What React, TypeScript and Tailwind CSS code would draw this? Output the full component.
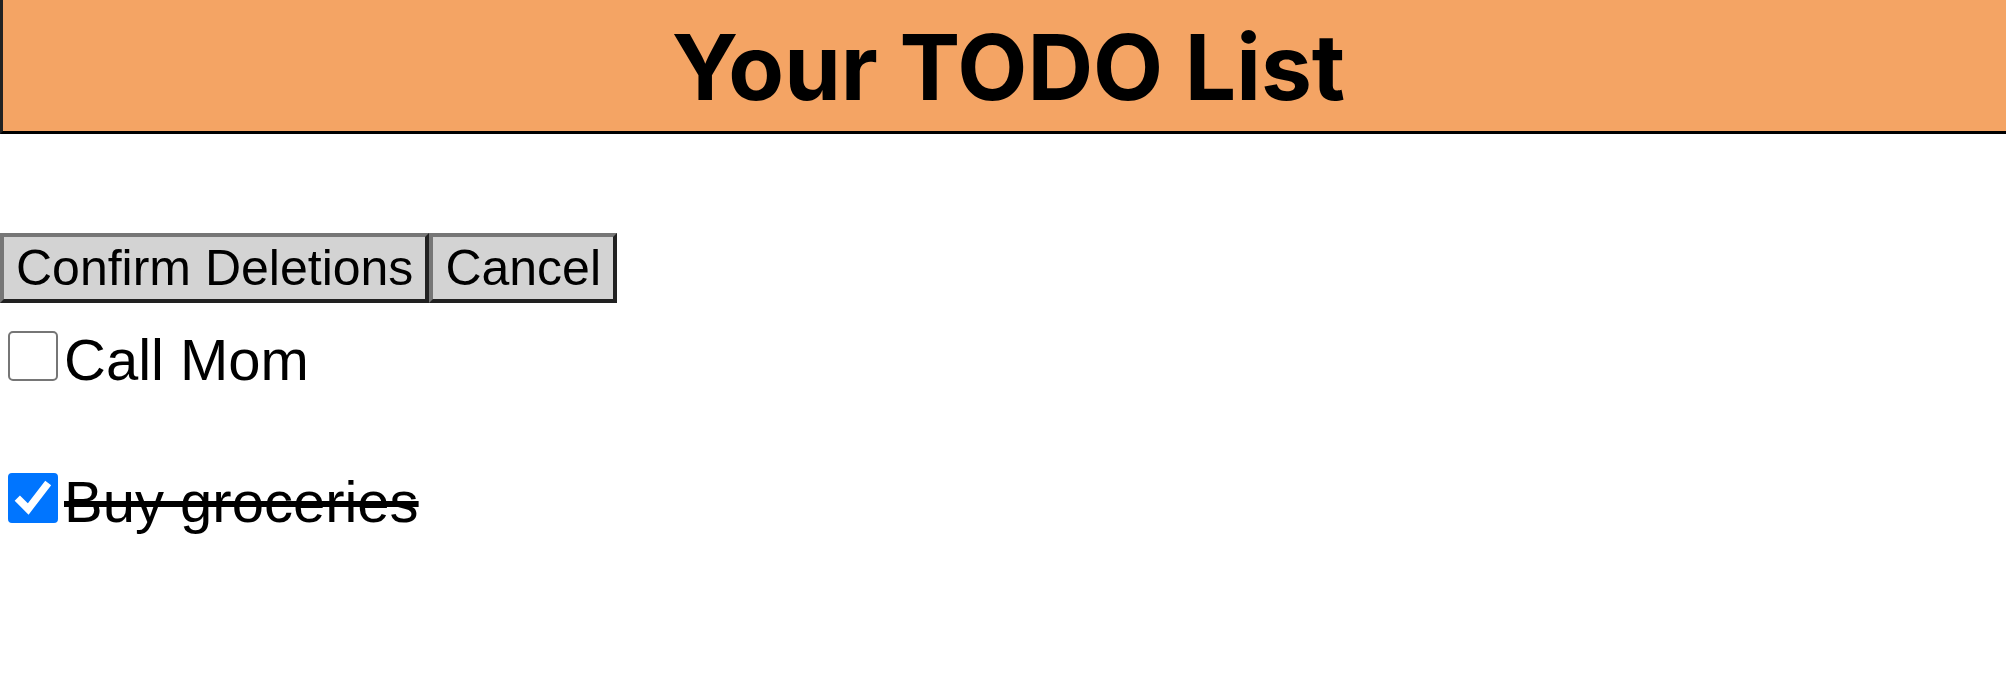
import { useState } from "react";

type Todo = { id: string; text: string; done: boolean };

const initialTodos: Todo[] = [
  { id: "call-mom", text: "Call Mom", done: false },
  { id: "buy-groceries", text: "Buy groceries", done: true },
];

const buttonClass =
  "h-[70px] border-4 border-t-[#767676] border-l-[#767676] border-r-[#212121] border-b-[#212121] bg-[#d3d3d3] px-3 text-[50px] leading-none whitespace-nowrap";

function TodoRow({ todo, onToggle }: { todo: Todo; onToggle: () => void }) {
  return (
    <li className="flex items-center gap-1.5 pl-2">
      <span className="grid size-[50px] shrink-0">
        <input
          id={todo.id}
          type="checkbox"
          checked={todo.done}
          onChange={onToggle}
          className="col-start-1 row-start-1 size-full appearance-none rounded-[5px] border-2 border-[#767676] bg-white checked:rounded-[4px] checked:border-[#0075ff] checked:bg-[#0075ff]"
        />
        {todo.done && (
          <svg
            viewBox="0 0 50 50"
            aria-hidden="true"
            className="pointer-events-none col-start-1 row-start-1 size-full"
          >
            <path d="M9.3 25.2 L20.2 36 L40.2 10" fill="none" stroke="white" strokeWidth="7.5" />
          </svg>
        )}
      </span>
      <label
        htmlFor={todo.id}
        className={
          todo.done
            ? "pt-2 text-[58px] leading-[70px] line-through decoration-[6px]"
            : "pt-2 text-[58px] leading-[70px]"
        }
      >
        {todo.text}
      </label>
    </li>
  );
}

export default function App() {
  const [todos, setTodos] = useState(initialTodos);
  const toggle = (id: string) =>
    setTodos(todos.map((t) => (t.id === id ? { ...t, done: !t.done } : t)));

  return (
    <div className="min-h-screen bg-white font-['Liberation_Sans',Arial,sans-serif] text-black">
      <header className="border-b-[3px] border-l-[3px] border-b-black border-l-[#222222] bg-[#f4a464] pt-3 pb-2 pl-2">
        <h1 className="text-center font-[Inter,sans-serif] text-[91px] leading-[111px] font-bold">
          Your TODO List
        </h1>
      </header>
      <main className="pt-[99px]">
        <div className="flex">
          <button type="button" className={buttonClass}>
            Confirm Deletions
          </button>
          <button type="button" className={buttonClass}>
            Cancel
          </button>
        </div>
        <ul className="flex flex-col gap-16 pt-3.5">
          {todos.map((todo) => (
            <TodoRow key={todo.id} todo={todo} onToggle={() => toggle(todo.id)} />
          ))}
        </ul>
      </main>
    </div>
  );
}
